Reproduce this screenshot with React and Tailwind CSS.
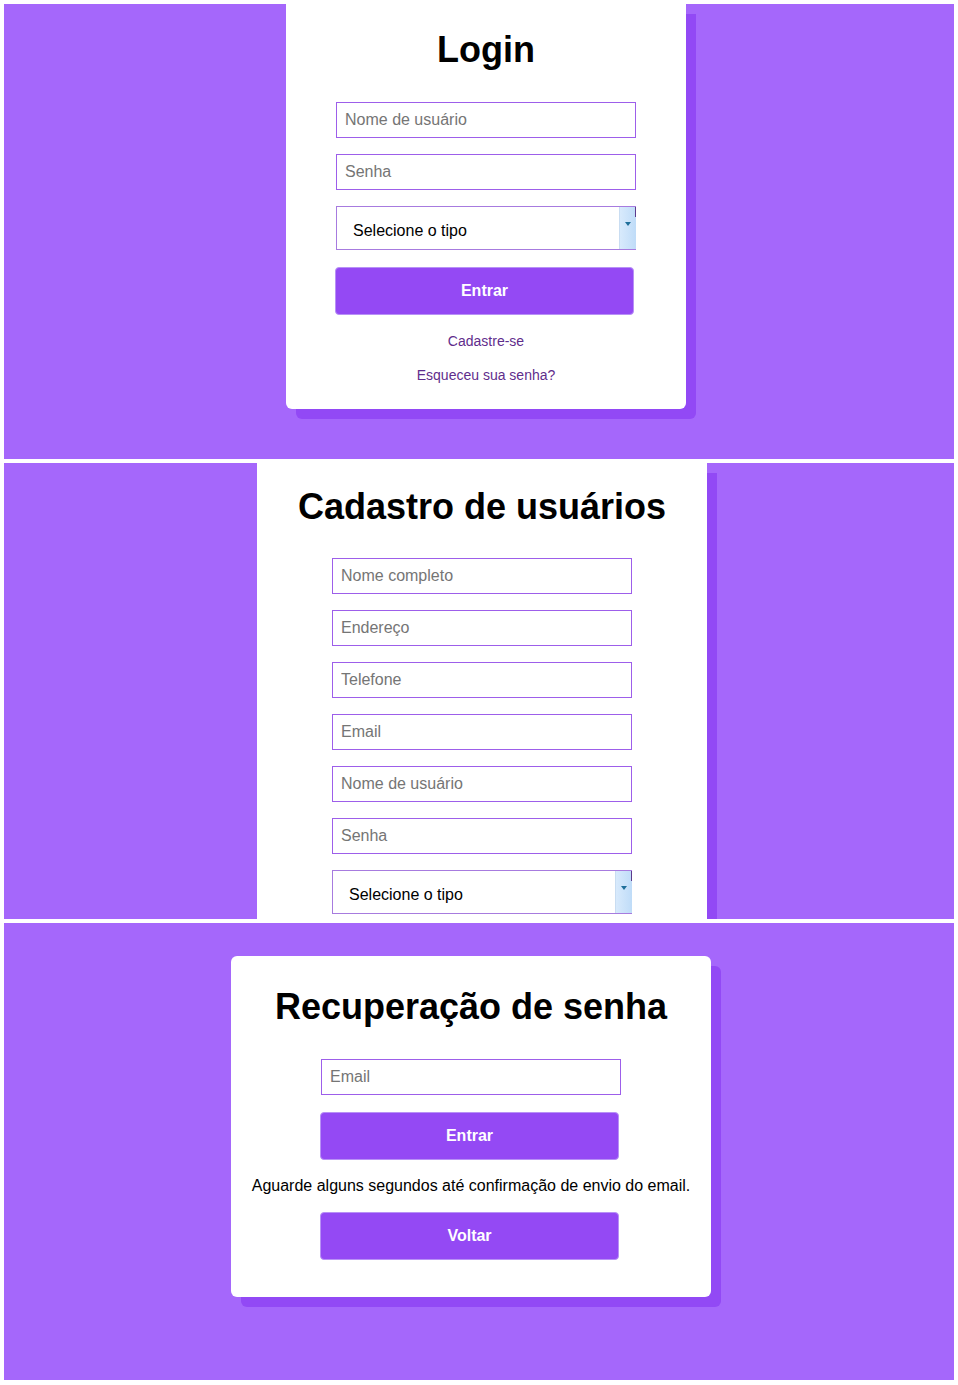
const font = { fontFamily: '"Liberation Sans", Arial, sans-serif' };

function Field({ placeholder }) {
  return (
    <input
      type="text"
      placeholder={placeholder}
      className="block w-[300px] h-9 border border-[#9d5eea] bg-white px-2 text-base text-black placeholder:text-[#757575] outline-none"
    />
  );
}

function TipoSelect() {
  return (
    <div className="flex w-[300px] h-11 border-y border-l border-[#a77bdf] bg-white">
      <span className="flex-1 flex items-center pl-4 pt-[5px] text-base text-black">Selecione o tipo</span>
      <div className="relative w-[17px] h-full bg-gradient-to-r from-[#d8eafc] to-[#bfdcf8] border-l border-[#c9ddf2] flex items-center justify-center">
        <span className="absolute right-0 top-0 h-[10px] w-px bg-[#5b3a8c]" />
        <span className="block -mt-2 w-0 h-0 border-l-[3px] border-r-[3px] border-t-[4px] border-l-transparent border-r-transparent border-t-[#1f6f9a]" />
      </div>
    </div>
  );
}

function Botao({ children }) {
  return (
    <div className="mr-[3px]">
      <button className="block w-[299px] h-12 rounded border border-[#b891f6] bg-[#9449f4] text-white font-bold text-base">
        {children}
      </button>
    </div>
  );
}

export default function App() {
  return (
    <div className="bg-white p-1 flex flex-col gap-1" style={font}>
      {/* Login */}
      <section className="h-[455px] bg-[#a567fb] overflow-hidden flex justify-center">
        <div className="ml-[14px] w-[400px] h-[405px] bg-white rounded-b-md shadow-[10px_10px_0_#9249f5] flex flex-col items-center pt-[25px]">
          <h1 className="text-[36px] font-bold leading-[41px] text-black">Login</h1>
          <div className="mt-[32px] flex flex-col gap-4">
            <Field placeholder="Nome de usuário" />
            <Field placeholder="Senha" />
            <TipoSelect />
          </div>
          <div className="mt-[17px]">
            <Botao>Entrar</Botao>
          </div>
          <a className="mt-[18px] text-sm leading-4 text-[#5f2d8c]">Cadastre-se</a>
          <a className="mt-[18px] text-sm leading-4 text-[#5f2d8c]">Esqueceu sua senha?</a>
        </div>
      </section>

      {/* Cadastro */}
      <section className="h-[456px] bg-[#a567fb] overflow-hidden flex justify-center">
        <div className="ml-[6px] w-[450px] h-[520px] bg-white shadow-[10px_10px_0_#9249f5] flex flex-col items-center pt-[23px]">
          <h1 className="text-[36px] font-bold leading-[41px] text-black">Cadastro de usuários</h1>
          <div className="mt-[31px] flex flex-col gap-4">
            <Field placeholder="Nome completo" />
            <Field placeholder="Endereço" />
            <Field placeholder="Telefone" />
            <Field placeholder="Email" />
            <Field placeholder="Nome de usuário" />
            <Field placeholder="Senha" />
            <TipoSelect />
          </div>
        </div>
      </section>

      {/* Recuperação */}
      <section className="h-[457px] bg-[#a567fb] overflow-hidden flex justify-center pt-[33px]">
        <div className="mr-[16px] w-[480px] h-[341px] bg-white rounded-md shadow-[10px_10px_0_#9249f5] flex flex-col items-center pt-[30px]">
          <h1 className="text-[36px] font-bold leading-[41px] text-black">Recuperação de senha</h1>
          <div className="mt-[32px]">
            <Field placeholder="Email" />
          </div>
          <div className="mt-[17px]">
            <Botao>Entrar</Botao>
          </div>
          <p className="mt-[17px] text-base leading-[18px] text-black">
            Aguarde alguns segundos até confirmação de envio do email.
          </p>
          <div className="mt-[17px]">
            <Botao>Voltar</Botao>
          </div>
        </div>
      </section>
    </div>
  );
}
